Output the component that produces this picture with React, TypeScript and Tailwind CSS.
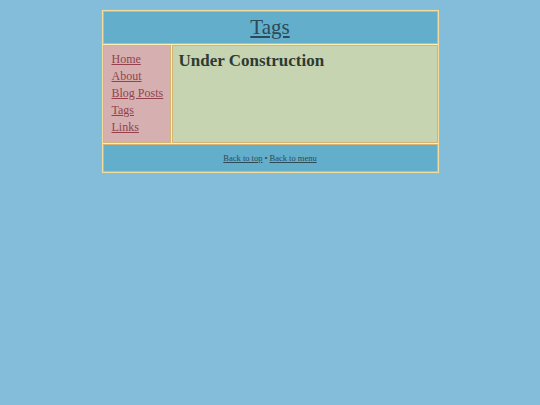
export default function App() {
  const serif = { fontFamily: '"Liberation Serif", "Times New Roman", serif' };
  return (
    <div className="min-h-[405px] w-full bg-[#84bdd9] pt-[9px]" style={serif}>
      <div className="mx-auto flex w-[339px] flex-col gap-[1px] border border-[#d2ae6c] bg-[#fcefb4] p-[1px] shadow-[inset_0_0_0_1px_#f3dc9c]">
        <div className="flex h-[33px] items-center justify-center border border-[#d6b574] bg-[#62aecb]">
          <a href="#" className="text-[21px] leading-none text-[#2c4a58] underline">Tags</a>
        </div>
        <div className="flex h-[98px] gap-[1px]">
          <div className="flex w-[68px] flex-col border border-[#d6b574] bg-[#d6b0b0] pl-[8px] pt-[5px]">
            {["Home", "About", "Blog Posts", "Tags", "Links"].map((l) => (
              <a key={l} href="#" className="text-[12px] leading-[17px] text-[#93424d] underline">{l}</a>
            ))}
          </div>
          <div className="flex-1 border border-[#d6b574] bg-[#c6d4b1] pl-[6px] pt-[5px]">
            <h1 className="text-[17px] font-bold leading-[20px] text-[#2e3b32]">Under Construction</h1>
          </div>
        </div>
        <div className="flex h-[28px] items-center justify-center border border-[#d6b574] bg-[#62aecb] text-[8.5px] text-[#2c4a58]">
          <a href="#" className="underline">Back to top</a>
          <span className="mx-[2px]">•</span>
          <a href="#" className="underline">Back to menu</a>
        </div>
      </div>
    </div>
  );
}
